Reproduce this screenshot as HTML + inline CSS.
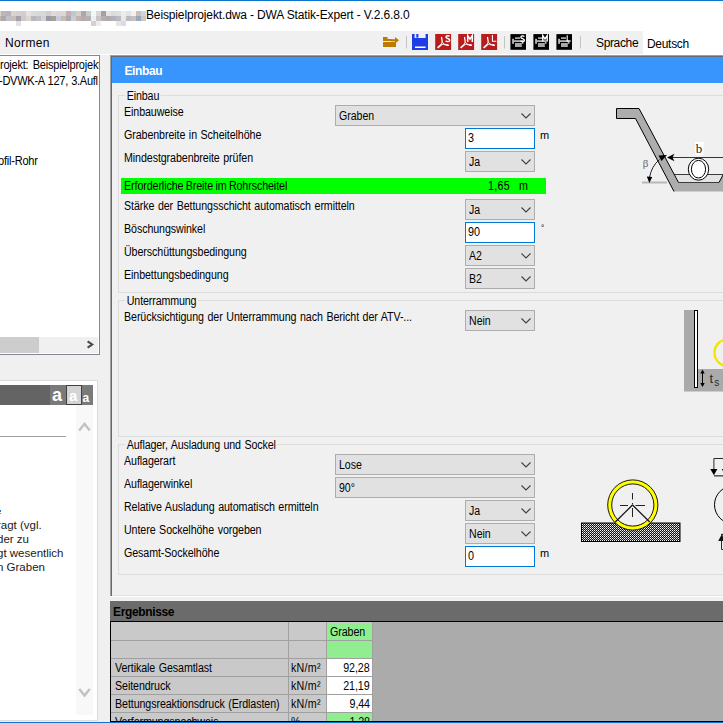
<!DOCTYPE html>
<html><head><meta charset="utf-8">
<style>
*{margin:0;padding:0;box-sizing:border-box}
html,body{width:723px;height:723px;overflow:hidden;background:#f0f0f0;font-family:"Liberation Sans",sans-serif;color:#000}
.a{position:absolute}
.t{position:absolute;font-size:12px;line-height:11px;white-space:nowrap;letter-spacing:-0.1px;word-spacing:0.8px;transform:scaleX(0.89);transform-origin:0 0}
.cb{position:absolute;border:1px solid #adadad;background:#e1e1e1;height:21px}
.cb span{position:absolute;left:2.5px;top:5px;font-size:12px;line-height:11px;white-space:nowrap;transform:scaleX(0.88);transform-origin:0 0}
.cb svg{position:absolute;right:3px;top:7px}
.tb{position:absolute;border:1px solid #0078d7;background:#fff;height:21px}
.tb span{position:absolute;left:2px;top:4px;font-size:12px;line-height:11px;transform:scaleX(0.9);transform-origin:0 0}
.gb{position:absolute;border:1px solid #dcdcdc;border-right:none}
#blur i{position:absolute;height:5px;display:block}
.gc{position:absolute;background:#f0f0f0;padding:0 2px;font-size:12px;line-height:11px;letter-spacing:-0.15px;word-spacing:0.8px;white-space:nowrap;transform:scaleX(0.89);transform-origin:0 0}
</style></head><body>
<!-- window top border -->
<div class="a" style="left:0;top:0;width:723px;height:1px;background:#0a74d0"></div>
<!-- title bar -->
<div class="a" style="left:0;top:1px;width:723px;height:54px;background:#fff"></div>
<div id="blur"><i style="left:0px;top:11px;width:1px;background:#d8d8d0"></i><i style="left:1px;top:11px;width:5px;background:#c0b4b4"></i><i style="left:6px;top:11px;width:5px;background:#b4b4bc"></i><i style="left:11px;top:11px;width:5px;background:#dcd4cc"></i><i style="left:16px;top:11px;width:5px;background:#d4d0d8"></i><i style="left:21px;top:11px;width:5px;background:#d8ccc8"></i><i style="left:26px;top:11px;width:5px;background:#e0e4e8"></i><i style="left:31px;top:11px;width:5px;background:#d8dce0"></i><i style="left:36px;top:11px;width:5px;background:#d8d8d8"></i><i style="left:41px;top:11px;width:5px;background:#d8d8d4"></i><i style="left:46px;top:11px;width:5px;background:#d0ccd4"></i><i style="left:51px;top:11px;width:5px;background:#e4d8d8"></i><i style="left:56px;top:11px;width:5px;background:#d8d8dc"></i><i style="left:61px;top:11px;width:5px;background:#d8d8d4"></i><i style="left:66px;top:11px;width:5px;background:#c8b0b0"></i><i style="left:71px;top:11px;width:5px;background:#b8c8d8"></i><i style="left:76px;top:11px;width:5px;background:#d8d0c8"></i><i style="left:81px;top:11px;width:5px;background:#a8a8b0"></i><i style="left:86px;top:11px;width:5px;background:#c8ccc8"></i><i style="left:91px;top:11px;width:5px;background:#f0f8ff"></i><i style="left:96px;top:11px;width:5px;background:#dcd8d4"></i><i style="left:101px;top:11px;width:5px;background:#a0a0a8"></i><i style="left:106px;top:11px;width:5px;background:#e4e4e4"></i><i style="left:111px;top:11px;width:5px;background:#dcdcd4"></i><i style="left:116px;top:11px;width:5px;background:#dce0e4"></i><i style="left:121px;top:11px;width:5px;background:#ecece8"></i><i style="left:126px;top:11px;width:5px;background:#e0e4e8"></i><i style="left:131px;top:11px;width:5px;background:#f4f0ec"></i><i style="left:136px;top:11px;width:5px;background:#c8c0bc"></i><i style="left:141px;top:11px;width:5px;background:#c8d8e8"></i><i style="left:0px;top:16px;width:1px;background:#b8b8b8"></i><i style="left:1px;top:16px;width:5px;background:#b0a8a8"></i><i style="left:6px;top:16px;width:5px;background:#c0c0c8"></i><i style="left:11px;top:16px;width:5px;background:#c8bcbc"></i><i style="left:16px;top:16px;width:5px;background:#a8a0a8"></i><i style="left:21px;top:16px;width:5px;background:#c8ccd0"></i><i style="left:26px;top:16px;width:5px;background:#dcd8d0"></i><i style="left:31px;top:16px;width:5px;background:#b8b8b8"></i><i style="left:36px;top:16px;width:5px;background:#c0c0cc"></i><i style="left:41px;top:16px;width:5px;background:#d8d0cc"></i><i style="left:46px;top:16px;width:5px;background:#9898a8"></i><i style="left:51px;top:16px;width:5px;background:#a8a098"></i><i style="left:56px;top:16px;width:5px;background:#c8ccd8"></i><i style="left:61px;top:16px;width:5px;background:#c8b8b8"></i><i style="left:66px;top:16px;width:5px;background:#b0a8b0"></i><i style="left:71px;top:16px;width:5px;background:#c8ccd4"></i><i style="left:76px;top:16px;width:5px;background:#c0b4b0"></i><i style="left:81px;top:16px;width:5px;background:#b0acb0"></i><i style="left:86px;top:16px;width:5px;background:#b8b0ac"></i><i style="left:91px;top:16px;width:5px;background:#e8f0f8"></i><i style="left:96px;top:16px;width:5px;background:#c8c4c4"></i><i style="left:101px;top:16px;width:5px;background:#b8acac"></i><i style="left:106px;top:16px;width:5px;background:#acacac"></i><i style="left:111px;top:16px;width:5px;background:#b0b4b8"></i><i style="left:116px;top:16px;width:5px;background:#b8bcc8"></i><i style="left:121px;top:16px;width:5px;background:#ece8e0"></i><i style="left:126px;top:16px;width:5px;background:#b8bcc0"></i><i style="left:131px;top:16px;width:5px;background:#c8c0bc"></i><i style="left:136px;top:16px;width:5px;background:#98a8b8"></i><i style="left:141px;top:16px;width:5px;background:#c8c8c8"></i><i style="left:16px;top:21px;width:5px;background:#e4e0e4"></i><i style="left:91px;top:21px;width:5px;background:#d8d0cc"></i><i style="left:96px;top:21px;width:5px;background:#e8eef4"></i><i style="left:116px;top:21px;width:5px;background:#e8e4e0"></i><i style="left:121px;top:21px;width:5px;background:#d8dce4"></i></div>
<div class="a" style="left:146px;top:9px;font-size:12px;line-height:12px;letter-spacing:-0.14px;white-space:nowrap">Beispielprojekt.dwa - DWA Statik-Expert - V.2.6.8.0</div>
<!-- menu / toolbar -->
<div class="a" style="left:0;top:31px;width:643px;height:23px;background:#f0f0f0"></div>
<div class="a" style="left:5px;top:37px;font-size:12px;line-height:12px;letter-spacing:0.35px;white-space:nowrap">Normen</div>
<div class="a" style="left:596px;top:37px;font-size:12px;line-height:12px;letter-spacing:-0.35px;white-space:nowrap">Sprache</div>
<div class="a" style="left:647px;top:38px;font-size:12px;line-height:12px;letter-spacing:-0.3px;white-space:nowrap">Deutsch</div>

<!-- left tree panel -->
<div class="a" style="left:0;top:55px;width:100px;height:300px;background:#fff;border-top:1px solid #828790;border-right:1px solid #828790;border-bottom:1px solid #828790"></div>
<div class="a" style="left:0;top:56px;width:99px;height:281px;overflow:hidden">
  <div class="t" style="left:-0.5px;top:4px;font-size:12px;letter-spacing:-0.25px;word-spacing:1.5px;transform:scaleX(0.92)">rojekt: Beispielprojekt</div>
  <div class="t" style="left:-1px;top:20px;font-size:12px;letter-spacing:-0.3px;word-spacing:0.5px;transform:scaleX(0.92)">-DVWK-A 127, 3.Aufl</div>
  <div class="t" style="left:-2px;top:100px;font-size:12px;letter-spacing:-0.25px;word-spacing:1.5px;transform:scaleX(0.92)">ofil-Rohr</div>
</div>
<div class="a" style="left:0;top:337px;width:98px;height:16px;background:#f0f0f0"></div>
<div class="a" style="left:0;top:337px;width:39px;height:16px;background:#cdcdcd"></div>

<!-- lower-left panel -->
<div class="a" style="left:0;top:380px;width:98px;height:341px;background:#fff;border-top:1px solid #dcdcdc;border-right:1px solid #dcdcdc;border-bottom:1px solid #dcdcdc"></div>
<div class="a" style="left:0;top:385px;width:50px;height:20px;background:#646464"></div>
<div class="a" style="left:50px;top:385px;width:43px;height:20px;background:#7a7a7a"></div>
<div class="a" style="left:76px;top:405px;width:17px;height:310px;background:#f8f8f8"></div>
<div class="a" style="left:0;top:436px;width:66px;height:1px;background:#a0a0a0"></div>

<!-- main panel -->
<div class="a" style="left:110px;top:55px;width:613px;height:541px;border-left:1px solid #a0a0a0;border-top:1px solid #a0a0a0"></div>
<div class="a" style="left:111px;top:56px;width:612px;height:540px;border-left:1px solid #696969;border-top:1px solid #696969"></div>
<div class="a" style="left:112px;top:595px;width:611px;height:1px;background:#e3e3e3"></div>
<div class="a" style="left:110px;top:596px;width:613px;height:1px;background:#fff"></div>
<div class="a" style="left:112px;top:57px;width:611px;height:26px;background:#3995fe"></div>
<div class="a" style="left:124.5px;top:66px;font-size:12px;line-height:11px;font-weight:bold;letter-spacing:-0.4px;color:#fff;white-space:nowrap">Einbau</div>

<div class="gb" style="left:118px;top:95px;width:605px;height:198px"></div><div class="gc" style="left:125px;top:91px">Einbau</div><div class="t" style="left:124px;top:107px;">Einbauweise</div><div class="t" style="left:124px;top:130px;">Grabenbreite in Scheitelhöhe</div><div class="t" style="left:124px;top:153px;">Mindestgrabenbreite prüfen</div><div class="t" style="left:124px;top:201px;">Stärke der Bettungsschicht automatisch ermitteln</div><div class="t" style="left:124px;top:224px;">Böschungswinkel</div><div class="t" style="left:124px;top:247px;">Überschüttungsbedingung</div><div class="t" style="left:124px;top:270px;">Einbettungsbedingung</div><div class="cb" style="left:335px;top:105px;width:200px"><span>Graben</span><svg width="10" height="6" viewBox="0 0 10 6"><path d="M0.5 0.5 L5 5 L9.5 0.5" fill="none" stroke="#404040" stroke-width="1.1"/></svg></div><div class="tb" style="left:465px;top:128px;width:70px"><span>3</span></div><div class="t" style="left:540px;top:130px;font-size:11px;transform:none">m</div><div class="cb" style="left:465px;top:151px;width:70px"><span>Ja</span><svg width="10" height="6" viewBox="0 0 10 6"><path d="M0.5 0.5 L5 5 L9.5 0.5" fill="none" stroke="#404040" stroke-width="1.1"/></svg></div><div class="a" style="left:121px;top:178px;width:425px;height:16px;background:#00ff00"></div><div class="t" style="left:124px;top:181px;word-spacing:-0.6px">Erforderliche Breite im Rohrscheitel</div><div class="t" style="left:488px;top:181px;letter-spacing:0.3px">1,65</div><div class="t" style="left:519px;top:181px;">m</div><div class="cb" style="left:465px;top:199px;width:70px"><span>Ja</span><svg width="10" height="6" viewBox="0 0 10 6"><path d="M0.5 0.5 L5 5 L9.5 0.5" fill="none" stroke="#404040" stroke-width="1.1"/></svg></div><div class="tb" style="left:465px;top:222px;width:70px"><span>90</span></div><div class="t" style="left:540.5px;top:223px;font-size:9px">°</div><div class="cb" style="left:465px;top:245px;width:70px"><span>A2</span><svg width="10" height="6" viewBox="0 0 10 6"><path d="M0.5 0.5 L5 5 L9.5 0.5" fill="none" stroke="#404040" stroke-width="1.1"/></svg></div><div class="cb" style="left:465px;top:268px;width:70px"><span>B2</span><svg width="10" height="6" viewBox="0 0 10 6"><path d="M0.5 0.5 L5 5 L9.5 0.5" fill="none" stroke="#404040" stroke-width="1.1"/></svg></div><div class="gb" style="left:118px;top:300px;width:605px;height:137px"></div><div class="gc" style="left:125px;top:296px">Unterrammung</div><div class="t" style="left:124px;top:312px;">Berücksichtigung der Unterrammung nach Bericht der ATV-...</div><div class="cb" style="left:465px;top:310px;width:70px"><span>Nein</span><svg width="10" height="6" viewBox="0 0 10 6"><path d="M0.5 0.5 L5 5 L9.5 0.5" fill="none" stroke="#404040" stroke-width="1.1"/></svg></div><div class="gb" style="left:118px;top:444px;width:605px;height:131px"></div><div class="gc" style="left:125px;top:440px">Auflager, Ausladung und Sockel</div><div class="t" style="left:124px;top:456px;">Auflagerart</div><div class="t" style="left:124px;top:479px;">Auflagerwinkel</div><div class="t" style="left:124px;top:502px;">Relative Ausladung automatisch ermitteln</div><div class="t" style="left:124px;top:525px;">Untere Sockelhöhe vorgeben</div><div class="t" style="left:124px;top:548px;">Gesamt-Sockelhöhe</div><div class="cb" style="left:335px;top:454px;width:200px"><span>Lose</span><svg width="10" height="6" viewBox="0 0 10 6"><path d="M0.5 0.5 L5 5 L9.5 0.5" fill="none" stroke="#404040" stroke-width="1.1"/></svg></div><div class="cb" style="left:335px;top:477px;width:200px"><span>90°</span><svg width="10" height="6" viewBox="0 0 10 6"><path d="M0.5 0.5 L5 5 L9.5 0.5" fill="none" stroke="#404040" stroke-width="1.1"/></svg></div><div class="cb" style="left:465px;top:500px;width:70px"><span>Ja</span><svg width="10" height="6" viewBox="0 0 10 6"><path d="M0.5 0.5 L5 5 L9.5 0.5" fill="none" stroke="#404040" stroke-width="1.1"/></svg></div><div class="cb" style="left:465px;top:523px;width:70px"><span>Nein</span><svg width="10" height="6" viewBox="0 0 10 6"><path d="M0.5 0.5 L5 5 L9.5 0.5" fill="none" stroke="#404040" stroke-width="1.1"/></svg></div><div class="tb" style="left:465px;top:546px;width:70px"><span>0</span></div><div class="t" style="left:540px;top:548px;font-size:11px;transform:none">m</div><svg class="a" style="left:0;top:0" width="723" height="723" viewBox="0 0 723 723">
<defs>
<pattern id="chk" x="0" y="0" width="2" height="2" patternUnits="userSpaceOnUse">
<rect x="0" y="0" width="2" height="2" fill="#141414"/><rect x="0" y="0" width="1" height="1" fill="#fafafa"/><rect x="1" y="1" width="1" height="1" fill="#b0b0b0"/>
</pattern>
</defs>
<!-- trench -->
<polygon points="616.5,108.5 639,108.5 678.5,182.5 719,182.5 723,175 723,191.5 674,191.5 635.5,118.5 616.5,118.5" fill="#adadad"/>
<polygon points="674,174.5 723,174.5 723,175 719,182.5 678.5,182.5" fill="#e4e4e4"/>
<line x1="674" y1="174.5" x2="723" y2="174.5" stroke="#3a3a3a" stroke-width="1"/>
<line x1="678.5" y1="182.5" x2="719" y2="182.5" stroke="#3a3a3a" stroke-width="1"/>
<polyline points="616.5,118.5 616.5,108.5 639,108.5 678.5,182.5" stroke="#000" fill="none" stroke-width="1"/>
<polyline points="616.5,118.5 635.5,118.5 674,191.5" stroke="#000" fill="none" stroke-width="1"/>
<line x1="719" y1="182.5" x2="723" y2="175" stroke="#000" stroke-width="1"/>
<line x1="642" y1="182.5" x2="667" y2="182.5" stroke="#b8b8b8" stroke-width="2"/>
<ellipse cx="698.5" cy="169.2" rx="10.2" ry="11" fill="#fff" stroke="#000" stroke-width="1"/>
<ellipse cx="698.5" cy="169.2" rx="7.1" ry="8.8" fill="#fff" stroke="#000" stroke-width="1"/>
<rect x="695" y="142" width="8.6" height="13.2" fill="#fff"/>
<text x="699" y="153" font-family="Liberation Serif" font-size="13" text-anchor="middle" fill="#1a1a1a">b</text>
<line x1="671" y1="157.5" x2="723" y2="157.5" stroke="#333" stroke-width="1"/>
<polygon points="667,157.5 674.5,153.8 672.5,157.5 674.5,161.2" fill="#000"/>
<text x="645.6" y="166.8" font-family="Liberation Serif" font-size="11" text-anchor="middle" fill="#666">β</text>
<path d="M649.4 178 Q651.5 166 659.5 159.5" fill="none" stroke="#222" stroke-width="1"/>
<polygon points="646.8,176.5 652.2,177 649.4,183" fill="#000"/>
<polygon points="658.5,155.5 667,155 661.5,161" fill="#000"/>
<!-- unterrammung -->
<rect x="684" y="310" width="14" height="81.5" fill="#aaaaaa"/>
<rect x="698" y="369" width="25" height="22.5" fill="#aaaaaa"/>
<rect x="694.5" y="310.5" width="3" height="77" fill="#fff" stroke="#000" stroke-width="1"/>
<line x1="702.5" y1="372" x2="702.5" y2="384" stroke="#000" stroke-width="1"/>
<polygon points="700.3,373.5 704.7,373.5 702.5,369.5" fill="#000"/>
<polygon points="700.3,383 704.7,383 702.5,387" fill="#000"/>
<text x="709.5" y="383.3" font-family="Liberation Sans" font-size="13" fill="#2a2a2a">t</text>
<text x="714.3" y="385.7" font-family="Liberation Sans" font-size="10" fill="#2a2a2a">s</text>
<circle cx="728" cy="352.7" r="13.5" fill="none" stroke="#f0e400" stroke-width="2.3"/>
<!-- auflager -->
<rect x="581.5" y="523" width="98.5" height="18.5" fill="url(#chk)" stroke="#000" stroke-width="1"/>
<circle cx="632.8" cy="505" r="21.1" fill="#f0f0f0"/><circle cx="632.8" cy="505" r="23.1" fill="none" stroke="#ffff00" stroke-width="4"/>
<circle cx="632.8" cy="505" r="25.1" fill="none" stroke="#000" stroke-width="0.9"/>
<circle cx="632.8" cy="505" r="21.1" fill="none" stroke="#000" stroke-width="0.9"/>
<line x1="632.5" y1="505" x2="615.3" y2="522" stroke="#111" stroke-width="1.2"/>
<line x1="632.5" y1="505" x2="649.7" y2="522" stroke="#111" stroke-width="1.2"/>
<line x1="620" y1="505.5" x2="645" y2="505.5" stroke="#222" stroke-width="1" stroke-dasharray="8,3,1.5,3,10"/>
<line x1="632.5" y1="493" x2="632.5" y2="517" stroke="#222" stroke-width="1" stroke-dasharray="6.5,3.5,1.5,3.5,10"/>
<!-- right figure -->
<polyline points="713.9,470 713.9,458.5 723,458.5" fill="none" stroke="#2a2a2a" stroke-width="1"/>
<polygon points="710.3,469 717.3,469 713.9,475.2" fill="#000"/><polygon points="721.8,469 728.8,469 725.3,475.2" fill="#000"/>
<rect x="714" y="475" width="9" height="1.6" fill="#5a5a5a"/>
<circle cx="733.5" cy="504.8" r="19" fill="none" stroke="#000" stroke-width="1"/>
<polygon points="718.2,541 725,541 721.8,534.2" fill="#111"/><rect x="721.2" y="533.8" width="2" height="1.6" fill="#222"/>
<polyline points="721.5,541 721.5,549.5 723,549.5" fill="none" stroke="#2a2a2a" stroke-width="1"/>
</svg>

<!-- results -->
<div class="a" style="left:110px;top:601px;width:613px;height:20px;background:#6b6b6b"></div>
<div class="a" style="left:113px;top:607px;font-size:12px;line-height:11px;font-weight:bold;letter-spacing:-0.35px;white-space:nowrap">Ergebnisse</div>
<div class="a" style="left:110px;top:621px;width:613px;height:1px;background:#000"></div>
<div class="a" style="left:110px;top:621px;width:1px;height:101px;background:#000"></div>
<div class="a" style="left:111px;top:622px;width:612px;height:99px;background:#ababab"></div>
<div class="a" style="left:110px;top:721px;width:613px;height:1px;background:#000"></div>
<div class="a" style="left:0;top:722px;width:723px;height:1px;background:#0a74d0"></div>
<div class="a" style="left:111px;top:622px;width:261px;height:99px;background:#c9c9c9"></div><div class="a" style="left:327px;top:623px;width:45px;height:17px;background:#90ee90"></div><div class="a" style="left:327px;top:641px;width:45px;height:17px;background:#90ee90"></div><div class="a" style="left:327px;top:659px;width:45px;height:17px;background:#fff"></div><div class="a" style="left:327px;top:677px;width:45px;height:17px;background:#fff"></div><div class="a" style="left:327px;top:695px;width:45px;height:17px;background:#fff"></div><div class="a" style="left:327px;top:713px;width:45px;height:8px;background:#90ee90"></div><div class="a" style="left:288px;top:622px;width:1px;height:99px;background:#a0a0a0"></div><div class="a" style="left:326px;top:622px;width:1px;height:99px;background:#a0a0a0"></div><div class="a" style="left:372px;top:622px;width:1px;height:99px;background:#a0a0a0"></div><div class="a" style="left:111px;top:640px;width:262px;height:1px;background:#a0a0a0"></div><div class="a" style="left:111px;top:658px;width:262px;height:1px;background:#a0a0a0"></div><div class="a" style="left:111px;top:676px;width:262px;height:1px;background:#a0a0a0"></div><div class="a" style="left:111px;top:694px;width:262px;height:1px;background:#a0a0a0"></div><div class="a" style="left:111px;top:712px;width:262px;height:1px;background:#a0a0a0"></div><div class="a" style="left:111px;top:622px;width:262px;height:99px;overflow:hidden"><div class="t" style="left:219px;top:5px">Graben</div><div class="t" style="left:4px;top:41px">Vertikale Gesamtlast</div><div class="t" style="left:180px;top:41px;letter-spacing:0.3px">kN/m²</div><div class="t" style="right:3.5px;top:41px;text-align:right;transform-origin:100% 0">92,28</div><div class="t" style="left:4px;top:59px">Seitendruck</div><div class="t" style="left:180px;top:59px;letter-spacing:0.3px">kN/m²</div><div class="t" style="right:3.5px;top:59px;text-align:right;transform-origin:100% 0">21,19</div><div class="t" style="left:4px;top:77px">Bettungsreaktionsdruck (Erdlasten)</div><div class="t" style="left:180px;top:77px;letter-spacing:0.3px">kN/m²</div><div class="t" style="right:3.5px;top:77px;text-align:right;transform-origin:100% 0">9,44</div><div class="t" style="left:4px;top:95px">Verformungsnachweis</div><div class="t" style="left:180px;top:95px;letter-spacing:0.3px">%</div><div class="t" style="right:3.5px;top:95px;text-align:right;transform-origin:100% 0">1,28</div></div><svg class="a" style="left:0;top:0" width="723" height="60" viewBox="0 0 723 60">
<g fill="#bb7b00">
<rect x="383" y="37" width="4.5" height="2.2"/>
<rect x="383" y="39" width="8.5" height="2"/>
<rect x="391" y="39.2" width="4.5" height="2.2"/>
<polygon points="395,37 399,40.3 395,43.5"/>
<rect x="383" y="42" width="13" height="5"/>
</g>
<rect x="406" y="36" width="1" height="12.5" fill="#c4c4c4"/>
<path d="M412 34 H414.6 V38 H425.6 V34 H428 V50 H412 Z" fill="#1b3ee6"/>
<rect x="416.3" y="34" width="2.1" height="3.6" fill="#1b3ee6"/>
<rect x="415" y="46.5" width="10.6" height="1.5" fill="#fff"/>
<rect x="504" y="36" width="1" height="12.5" fill="#c4c4c4"/>
<rect x="580" y="36" width="1" height="12.5" fill="#c4c4c4"/>
<g transform="translate(0,0)"><rect x="435.2" y="34" width="15.9" height="16" fill="#b81c1c"/><path d="M441.7 37 C441.2 38.6 442.6 40.2 442 42" fill="none" stroke="#fff" stroke-width="1.3"/>
<path d="M442 42.2 L444.3 44 L441 44.5 Z" fill="none" stroke="#fff" stroke-width="0.9"/>
<path d="M441.3 44.6 L437.6 47.8" fill="none" stroke="#fff" stroke-width="1.7"/>
<path d="M443.8 44.3 L448.6 45.3" fill="none" stroke="#fff" stroke-width="1.2"/>
<ellipse cx="447.6" cy="45.2" rx="1.2" ry="0.9" fill="#fff"/><path d="M449.6 36.4 C448.9 35.4 446 35.3 446 37 C446 38.7 449.7 38.4 449.7 40.2 C449.7 42 446.6 42 445.7 40.8" fill="none" stroke="#fff" stroke-width="1.45"/></g><g transform="translate(23,0)"><rect x="435.2" y="34" width="15.9" height="16" fill="#b81c1c"/><path d="M441.7 37 C441.2 38.6 442.6 40.2 442 42" fill="none" stroke="#fff" stroke-width="1.3"/>
<path d="M442 42.2 L444.3 44 L441 44.5 Z" fill="none" stroke="#fff" stroke-width="0.9"/>
<path d="M441.3 44.6 L437.6 47.8" fill="none" stroke="#fff" stroke-width="1.7"/>
<path d="M443.8 44.3 L448.6 45.3" fill="none" stroke="#fff" stroke-width="1.2"/>
<ellipse cx="447.6" cy="45.2" rx="1.2" ry="0.9" fill="#fff"/><path d="M444.7 41.9 V35.6 L447 39.2 L449.3 35.6 V41.9" fill="none" stroke="#fff" stroke-width="1.5"/></g><g transform="translate(46,0)"><rect x="435.2" y="34" width="15.9" height="16" fill="#b81c1c"/><path d="M441.7 37 C441.2 38.6 442.6 40.2 442 42" fill="none" stroke="#fff" stroke-width="1.3"/>
<path d="M442 42.2 L444.3 44 L441 44.5 Z" fill="none" stroke="#fff" stroke-width="0.9"/>
<path d="M441.3 44.6 L437.6 47.8" fill="none" stroke="#fff" stroke-width="1.7"/>
<path d="M443.8 44.3 L448.6 45.3" fill="none" stroke="#fff" stroke-width="1.2"/>
<ellipse cx="447.6" cy="45.2" rx="1.2" ry="0.9" fill="#fff"/><path d="M446.4 35 V41.2 H450.4" fill="none" stroke="#fff" stroke-width="1.1"/></g>
<g transform="translate(0,0)"><rect x="510.4" y="34.1" width="15.6" height="15.7" fill="#000"/>
<rect x="515" y="37.3" width="5" height="1.6" fill="#b4b4b4"/>
<rect x="512.1" y="38.8" width="1.9" height="5" fill="#b4b4b4"/>
<rect x="514" y="40.2" width="9.5" height="1.8" fill="#b4b4b4"/>
<rect x="521.8" y="41.5" width="1.7" height="2.3" fill="#b4b4b4"/>
<rect x="515" y="43" width="6.8" height="4" fill="#a8a8a8"/><path d="M524.3 36.6 C523.6 35.6 520.9 35.5 520.9 37.2 C520.9 38.8 524.4 38.5 524.4 40.2 C524.4 41.9 521.5 41.9 520.6 40.8" fill="none" stroke="#fff" stroke-width="1.4"/></g><g transform="translate(23,0)"><rect x="510.4" y="34.1" width="15.6" height="15.7" fill="#000"/>
<rect x="515" y="37.3" width="5" height="1.6" fill="#b4b4b4"/>
<rect x="512.1" y="38.8" width="1.9" height="5" fill="#b4b4b4"/>
<rect x="514" y="40.2" width="9.5" height="1.8" fill="#b4b4b4"/>
<rect x="521.8" y="41.5" width="1.7" height="2.3" fill="#b4b4b4"/>
<rect x="515" y="43" width="6.8" height="4" fill="#a8a8a8"/><path d="M519.8 41.5 V35.6 L522 39 L524.2 35.6 V41.5" fill="none" stroke="#fff" stroke-width="1.4"/></g><g transform="translate(46,0)"><rect x="510.4" y="34.1" width="15.6" height="15.7" fill="#000"/>
<rect x="515" y="37.3" width="5" height="1.6" fill="#b4b4b4"/>
<rect x="512.1" y="38.8" width="1.9" height="5" fill="#b4b4b4"/>
<rect x="514" y="40.2" width="9.5" height="1.8" fill="#b4b4b4"/>
<rect x="521.8" y="41.5" width="1.7" height="2.3" fill="#b4b4b4"/>
<rect x="515" y="43" width="6.8" height="4" fill="#a8a8a8"/><path d="M521.2 35.3 V41 H524.8" fill="none" stroke="#fff" stroke-width="1.1"/></g>
</svg><svg class="a" style="left:80px;top:335px" width="20" height="20" viewBox="80 335 20 20"><path d="M87.6 341.3 L92.2 344.5 L87.6 347.7" fill="none" stroke="#4a4a4a" stroke-width="2.1"/></svg>
<div class="a" style="left:52px;top:385px;font-size:18px;line-height:20px;font-weight:bold;color:#fff">a</div>
<div class="a" style="left:66px;top:385px;width:16px;height:20px;background:#d4d4d4;border:1px solid #404040"></div>
<div class="a" style="left:69px;top:386px;font-size:15px;line-height:20px;font-weight:bold;color:#fff">a</div>
<div class="a" style="left:82.5px;top:390px;font-size:12px;line-height:16px;font-weight:bold;color:#fff">a</div>
<svg class="a" style="left:78px;top:421px" width="13" height="11" viewBox="0 0 13 11"><path d="M1.2 9.5 L6.5 3 L11.8 9.5" fill="none" stroke="#c2c2c2" stroke-width="2.4"/></svg>
<svg class="a" style="left:78px;top:687px" width="13" height="11" viewBox="0 0 13 11"><path d="M1.2 2 L6.5 8.5 L11.8 2" fill="none" stroke="#c2c2c2" stroke-width="2.4"/></svg>
<div class="a" style="left:0;top:405px;width:76px;height:200px;overflow:hidden;font-size:11.5px;line-height:11px;white-space:nowrap;color:#1a1a1a"><div class="a" style="left:-3px;top:115px">ragt (vgl.</div><div class="a" style="left:-3px;top:129px">der zu</div><div class="a" style="left:-3px;top:143px">gt wesentlich</div><div class="a" style="left:-3px;top:157px">n Graben</div></div>
<div class="a" style="left:0;top:510px;width:1px;height:2px;background:#1a78e0"></div><div class="a" style="left:0;top:513px;width:1px;height:1px;background:#5aa0f0"></div></body></html>
